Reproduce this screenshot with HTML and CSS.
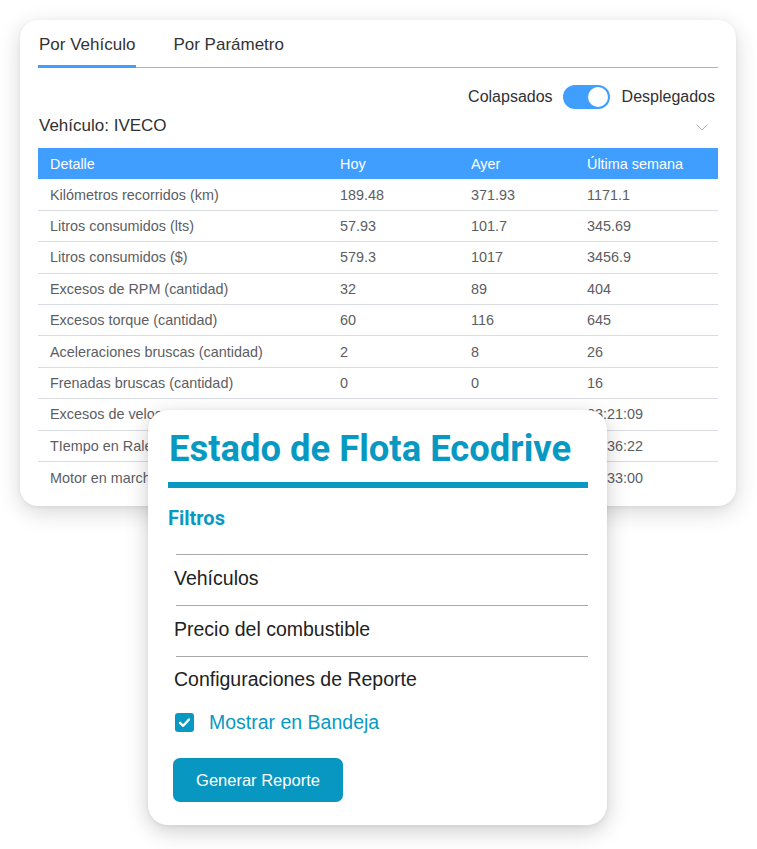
FILE: index.html
```html
<!DOCTYPE html>
<html lang="es">
<head>
<meta charset="utf-8">
<title>Estado de Flota Ecodrive</title>
<link rel="stylesheet" href="styles.css">
</head>
<body>
<div class="stage">
  <section class="report-card">
    <nav class="tabs">
      <span class="tab active">Por Vehículo</span>
      <span class="tab">Por Parámetro</span>
    </nav>
    <div class="toggle-row">
      <span class="toggle-label">Colapsados</span>
      <span class="switch"><span class="knob"></span></span>
      <span class="toggle-label">Desplegados</span>
    </div>
    <div class="vehicle-row">
      <span class="vehicle">Vehículo: IVECO</span>
      <svg class="chevron" width="12" height="7" viewBox="0 0 12 7"><path d="M0.5 0.5 L6 6 L11.5 0.5" fill="none" stroke="#b5b5b5" stroke-width="1"/></svg>
    </div>
    <div class="table">
      <div class="row head"><span>Detalle</span><span>Hoy</span><span>Ayer</span><span>Última semana</span></div>
      <div class="row"><span>Kilómetros recorridos (km)</span><span>189.48</span><span>371.93</span><span>1171.1</span></div>
      <div class="row"><span>Litros consumidos (lts)</span><span>57.93</span><span>101.7</span><span>345.69</span></div>
      <div class="row"><span>Litros consumidos ($)</span><span>579.3</span><span>1017</span><span>3456.9</span></div>
      <div class="row"><span>Excesos de RPM (cantidad)</span><span>32</span><span>89</span><span>404</span></div>
      <div class="row"><span>Excesos torque (cantidad)</span><span>60</span><span>116</span><span>645</span></div>
      <div class="row"><span>Aceleraciones bruscas (cantidad)</span><span>2</span><span>8</span><span>26</span></div>
      <div class="row"><span>Frenadas bruscas (cantidad)</span><span>0</span><span>0</span><span>16</span></div>
      <div class="row"><span>Excesos de veloc</span><span></span><span></span><span>03:21:09</span></div>
      <div class="row"><span>TIempo en Rale</span><span></span><span></span><span>01:36:22</span></div>
      <div class="row last"><span>Motor en march</span><span></span><span></span><span>02:33:00</span></div>
    </div>
  </section>

  <section class="filter-card">
    <h1 class="title">Estado de Flota Ecodrive</h1>
    <div class="title-bar"></div>
    <h2 class="filters-heading">Filtros</h2>
    <div class="filters">
      <div class="filter-item"><span>Vehículos</span></div>
      <div class="filter-item"><span>Precio del combustible</span></div>
      <div class="filter-item short"><span>Configuraciones de Reporte</span></div>
    </div>
    <label class="check-row">
      <span class="checkbox"><svg width="19" height="19" viewBox="0 0 19 19"><path d="M5 9.8 L8.2 12.8 L14 6.5" fill="none" stroke="#fff" stroke-width="2.4" stroke-linecap="round" stroke-linejoin="round"/></svg></span>
      <span class="check-label">Mostrar en Bandeja</span>
    </label>
    <button class="generate">Generar Reporte</button>
  </section>
</div>
</body>
</html>
```

FILE: styles.css
```css
html, body {
  margin: 0;
  padding: 0;
  background: #ffffff;
}

body {
  font-family: "Liberation Sans", Arial, sans-serif;
}

.stage {
  position: relative;
  width: 757px;
  height: 849px;
  overflow: hidden;
  padding-top: 20px;
  box-sizing: border-box;
}

.report-card {
  margin-left: 20px;
  width: 716px;
  height: 486px;
  box-sizing: border-box;
  padding: 15px 18px 0 18px;
  background: #fff;
  border-radius: 18px;
  box-shadow: 0 6px 22px rgba(0, 0, 0, 0.16), 0 1px 4px rgba(0, 0, 0, 0.06);
}

.tabs {
  display: flex;
  gap: 36px;
  border-bottom: 1px solid #b2b2b2;
}

.tab {
  font-size: 17px;
  line-height: 20px;
  color: #333;
  padding: 0 1px 10px 1px;
  margin-bottom: -1px;
  border-bottom: 3px solid transparent;
}

.tab.active {
  border-bottom-color: #409eff;
}

.toggle-row {
  display: flex;
  justify-content: flex-end;
  align-items: center;
  margin-top: 17px;
  padding-right: 3px;
  height: 24px;
}

.toggle-label {
  font-size: 16px;
  color: #303133;
}

.switch {
  display: flex;
  justify-content: flex-end;
  align-items: center;
  width: 47px;
  height: 24px;
  box-sizing: border-box;
  padding: 2px;
  margin: 0 12px 0 10px;
  border-radius: 12px;
  background: #409eff;
}

.knob {
  width: 20px;
  height: 20px;
  border-radius: 50%;
  background: #fff;
}

.vehicle-row {
  display: flex;
  justify-content: space-between;
  align-items: center;
  margin-top: 7px;
  height: 20px;
}

.vehicle {
  font-size: 17px;
  line-height: 20px;
  color: #303133;
  padding-left: 1px;
}

.chevron {
  margin-right: 10px;
  margin-top: 2px;
}

.table {
  margin-top: 12px;
}

.row {
  display: grid;
  grid-template-columns: 290px 131px 116px 143px;
  align-items: center;
  height: 31.4px;
  box-sizing: border-box;
  border-bottom: 1px solid #d9dce2;
  font-size: 14.4px;
  color: #5c5e63;
}

.row span {
  padding-left: 12px;
  white-space: nowrap;
}

.row.head {
  background: #409eff;
  color: #ffffff;
  border-bottom: none;
}

.row.last {
  border-bottom: none;
}

/* overlay card lying on top of the table */
.filter-card {
  position: absolute;
  left: 148px;
  top: 410px;
  width: 459px;
  height: 415px;
  box-sizing: border-box;
  padding: 18px 19px 0 20px;
  background: #fff;
  border-radius: 20px;
  box-shadow: 0 6px 22px rgba(0, 0, 0, 0.2), 0 1px 4px rgba(0, 0, 0, 0.06);
}

.title {
  margin: 0;
  font-family: Roboto, "Liberation Sans", sans-serif;
  font-weight: 700;
  font-size: 36.4px;
  line-height: 42px;
  color: #0899c3;
  padding-left: 1px;
}

.title-bar {
  margin-top: 12px;
  height: 6px;
  background: #0899c3;
}

.filters-heading {
  margin: 19px 0 0 0;
  font-family: Roboto, "Liberation Sans", sans-serif;
  font-weight: 700;
  font-size: 20px;
  line-height: 22px;
  color: #0899c3;
}

.filters {
  margin-top: 25px;
}

.filter-item {
  display: flex;
  align-items: center;
  height: 51px;
  padding-bottom: 4px;
  margin-left: 8px;
  border-top: 1px solid #a8a8a8;
  box-sizing: border-box;
  font-size: 19.5px;
  color: #222222;
}

.filter-item span {
  margin-left: -2px;
}

.filter-item.short {
  height: 46px;
  padding-bottom: 0;
}

.check-row {
  display: flex;
  align-items: center;
  gap: 15px;
  margin: 10px 0 0 7px;
  height: 20px;
}

.checkbox {
  display: block;
  width: 19px;
  height: 19px;
  border-radius: 3px;
  background: #0899c3;
}

.checkbox svg {
  display: block;
}

.check-label {
  font-size: 19.5px;
  color: #0899c3;
}

.generate {
  display: block;
  margin: 26px 0 0 5px;
  width: 170px;
  height: 44px;
  border: none;
  border-radius: 7px;
  background: #0897c0;
  color: #fff;
  font-family: "Liberation Sans", Arial, sans-serif;
  font-size: 16.5px;
  padding: 0;
}
```
